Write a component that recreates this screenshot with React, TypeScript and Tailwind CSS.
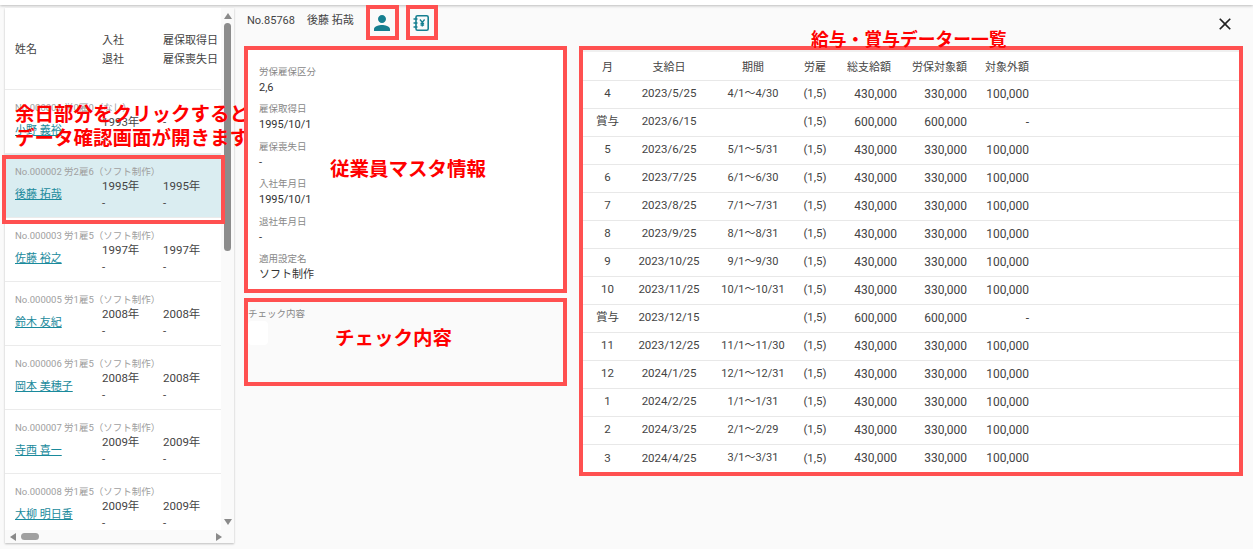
import { MdPerson, MdClose } from 'react-icons/md'

const employees = [
  { no: 'No.000001 労0雇0（なし）', name: '小野 義裕', a: '1993年', b: '-', c: '-' },
  { no: 'No.000002 労2雇6（ソフト制作）', name: '後藤 拓哉', a: '1995年', b: '1995年', c: '-', selected: true },
  { no: 'No.000003 労1雇5（ソフト制作）', name: '佐藤 裕之', a: '1997年', b: '1997年', c: '-' },
  { no: 'No.000005 労1雇5（ソフト制作）', name: '鈴木 友紀', a: '2008年', b: '2008年', c: '-' },
  { no: 'No.000006 労1雇5（ソフト制作）', name: '岡本 美穂子', a: '2008年', b: '2008年', c: '-' },
  { no: 'No.000007 労1雇5（ソフト制作）', name: '寺西 喜一', a: '2009年', b: '2009年', c: '-' },
  { no: 'No.000008 労1雇5（ソフト制作）', name: '大柳 明日香', a: '2009年', b: '2009年', c: '-' },
]

const master = [
  { label: '労保雇保区分', value: '2,6' },
  { label: '雇保取得日', value: '1995/10/1' },
  { label: '雇保喪失日', value: '-' },
  { label: '入社年月日', value: '1995/10/1' },
  { label: '退社年月日', value: '-' },
  { label: '適用設定名', value: 'ソフト制作' },
]

const salary = [
  ['4', '2023/5/25', '4/1～4/30'],
  ['賞与', '2023/6/15', ''],
  ['5', '2023/6/25', '5/1～5/31'],
  ['6', '2023/7/25', '6/1～6/30'],
  ['7', '2023/8/25', '7/1～7/31'],
  ['8', '2023/9/25', '8/1～8/31'],
  ['9', '2023/10/25', '9/1～9/30'],
  ['10', '2023/11/25', '10/1～10/31'],
  ['賞与', '2023/12/15', ''],
  ['11', '2023/12/25', '11/1～11/30'],
  ['12', '2024/1/25', '12/1～12/31'],
  ['1', '2024/2/25', '1/1～1/31'],
  ['2', '2024/3/25', '2/1～2/29'],
  ['3', '2024/4/25', '3/1～3/31'],
]

function BookIcon() {
  return (
    <svg width="16" height="16" viewBox="0 0 16 16" fill="none" stroke="#167f90" className="-ml-[2px]">
      <rect x="3" y="0.8" width="12.2" height="14.4" rx="1.5" strokeWidth="1.6" />
      <path d="M0.5 4h4M0.5 8h4M0.5 12h4" strokeWidth="1.4" />
      <path d="M7 4.5l2.3 3 2.3-3M9.3 7.5v4M7.5 8.4h3.6M7.5 10h3.6" strokeWidth="1.3" />
    </svg>
  )
}

function Arrow({ dir }: { dir: 'up' | 'down' | 'left' | 'right' }) {
  const points = {
    up: '0,6 4,0 8,6',
    down: '0,0 4,6 8,0',
    left: '6,0 0,4 6,8',
    right: '0,0 6,4 0,8',
  }[dir]
  return (
    <svg width="8" height="8" viewBox="0 0 8 8" className="shrink-0">
      <polygon points={points} fill="#8a8a8a" />
    </svg>
  )
}

function EmployeeRow({ item }: { item: (typeof employees)[number] }) {
  return (
    <div className={`relative h-16 shrink-0 border-b border-[#ebebeb] ${item.selected ? 'bg-[#daedf1]' : 'bg-white'}`}>
      <div className="pl-[10px] pt-[11px] text-[9.5px] leading-[14px] text-[#a0a0a0] whitespace-nowrap">{item.no}</div>
      <div className="flex -mt-[1px]">
        <a className="w-[97px] pl-[10px] pt-[8px] text-[11px] leading-[18px] text-[#1a8a9c] underline whitespace-nowrap">{item.name}</a>
        <div className="w-[61px] text-[11.5px] leading-[16px] text-[#444]">
          <div>{item.a}</div>
          <div className="mt-[1px]">{item.c}</div>
        </div>
        <div className="text-[11.5px] leading-[16px] text-[#444]">
          <div>{item.b}</div>
          <div className="mt-[1px]">{item.c}</div>
        </div>
      </div>
    </div>
  )
}

export default function App() {
  return (
    <div className="relative w-[1253px] h-[549px] overflow-hidden bg-[#fafafa] text-[#444] font-['Roboto','Noto_Sans_CJK_JP',sans-serif]">
      <div className="h-[5px] bg-white shadow-[0_1px_3px_rgba(0,0,0,0.25)]" />
      <div className="flex">
        {/* 従業員一覧 */}
        <div className="ml-[5px] mt-[3px] w-[229px] h-[535px] flex flex-col bg-[#fafafa] shadow-[0_1px_2px_rgba(0,0,0,0.25)]">
          <div className="flex flex-1 min-h-0">
            <div className="w-[216px] flex flex-col overflow-hidden">
              <div className="h-[82px] shrink-0 flex bg-white border-b border-[#ebebeb] text-[11px] text-[#444]">
                <div className="w-[97px] pl-[10px] pt-[34px]">姓名</div>
                <div className="w-[61px] pt-[23px] leading-[19px]">
                  <div>入社</div>
                  <div>退社</div>
                </div>
                <div className="pt-[23px] leading-[19px] whitespace-nowrap">
                  <div>雇保取得日</div>
                  <div>雇保喪失日</div>
                </div>
              </div>
              {employees.map(item => <EmployeeRow key={item.no} item={item} />)}
            </div>
            <div className="w-[13px] flex flex-col items-center pt-[5px] pb-[3px]">
              <Arrow dir="up" />
              <div className="w-[7px] h-[228px] mt-[2px] rounded-full bg-[#8c8c8c]" />
              <div className="flex-1" />
              <Arrow dir="down" />
            </div>
          </div>
          <div className="h-[13px] shrink-0 flex items-center pl-[5px] pr-[10px]">
            <Arrow dir="left" />
            <div className="w-[18px] h-[7px] ml-[3px] rounded-full bg-[#a0a0a0]" />
            <div className="flex-1" />
            <Arrow dir="right" />
          </div>
        </div>

        {/* 右側 */}
        <div className="relative z-20 flex-1 ml-[10px]">
          <div className="h-[35px] flex items-center text-[11px] text-[#444]">
            <span className="ml-[3px] w-[60px] -mt-[2px]">No.85768</span>
            <span className="w-[59px] -mt-[2px]">後藤 拓哉</span>
            <div className="w-[33px] h-[35px] flex items-center justify-center border-4 border-[#ff5050]">
              <MdPerson size={24} color="#167f90" className="-ml-[2px]" />
            </div>
            <div className="ml-[7px] w-[32px] h-[35px] flex items-center justify-center border-4 border-[#ff5050]">
              <BookIcon />
            </div>
            <div className="flex-1" />
            <MdClose size={20} color="#222" className="mr-[18px] mt-[3px]" />
          </div>

          <div className="mt-[6px] flex items-start">
            <div className="w-[323px] shrink-0">
              <div className="relative h-[247px] border-4 border-[#ff5050] bg-white pl-[11px] pt-[15px]">
                {master.map(row => (
                  <div key={row.label} className="h-[37.4px]">
                    <div className="text-[9.5px] leading-[14px] text-[#888]">{row.label}</div>
                    <div className="mt-[1px] text-[11px] leading-[16px] text-[#333]">{row.value}</div>
                  </div>
                ))}
                <div className="absolute left-[82px] top-[107px] text-[19.5px] leading-[26px] font-bold text-[#ff0000] whitespace-nowrap">従業員マスタ情報</div>
              </div>
              <div className="relative mt-[5px] h-[88px] border-4 border-[#ff5050] bg-[#fafafa]">
                <div className="pt-[5px] text-[9.5px] leading-[14px] text-[#888]">チェック内容</div>
                <div className="w-[20px] h-[24px] rounded bg-white" />
                <div className="absolute left-[87px] top-[24px] text-[19.5px] leading-[26px] font-bold text-[#ff0000] whitespace-nowrap">チェック内容</div>
              </div>
            </div>

            <div className="relative ml-[12px] w-[664px] h-[430px] border-4 border-[#ff5050] bg-white">
              <div className="absolute left-[228px] top-[-22px] text-[17.8px] leading-[24px] font-bold text-[#ff0000] whitespace-nowrap">給与・賞与データー一覧</div>
              <table className="w-full table-fixed border-collapse text-[11.5px] text-[#444]">
                <colgroup>
                  <col className="w-[49px]" />
                  <col className="w-[74px]" />
                  <col className="w-[94px]" />
                  <col className="w-[30px]" />
                  <col className="w-[67px]" />
                  <col className="w-[70px]" />
                  <col className="w-[62px]" />
                  <col />
                </colgroup>
                <thead>
                  <tr className="h-[29px] border-t-2 border-b border-t-[#f0f0f0] border-b-[#e8e8e8] text-[11px]">
                    <th className="font-normal text-center pt-[4px]">月</th>
                    <th className="font-normal text-center pt-[4px]">支給日</th>
                    <th className="font-normal text-center pt-[4px]">期間</th>
                    <th className="font-normal text-center pt-[4px]">労雇</th>
                    <th className="font-normal text-right pr-[6px] pt-[4px]">総支給額</th>
                    <th className="font-normal text-right pt-[4px]">労保対象額</th>
                    <th className="font-normal text-right pt-[4px]">対象外額</th>
                    <th />
                  </tr>
                </thead>
                <tbody>
                  {salary.map(([month, date, period], i) => {
                    const bonus = month === '賞与'
                    return (
                      <tr key={i} className="h-[28px] border-b border-[#e8e8e8] last:border-b-0">
                        <td className="text-center">{month}</td>
                        <td className="text-center">{date}</td>
                        <td className="text-center text-[11px]">{period}</td>
                        <td className="text-center">(1,5)</td>
                        <td className="text-right text-[12px]">{bonus ? '600,000' : '430,000'}</td>
                        <td className="text-right text-[12px]">{bonus ? '600,000' : '330,000'}</td>
                        <td className="text-right text-[12px]">{bonus ? '-' : '100,000'}</td>
                        <td />
                      </tr>
                    )
                  })}
                </tbody>
              </table>
            </div>
          </div>
        </div>
      </div>

      {/* 注釈 */}
      <div className="absolute z-10 left-[15px] top-[103px] text-[19.5px] leading-[24px] font-bold text-[#ff0000] whitespace-nowrap">
        <div>余日部分をクリックすると</div>
        <div>データ確認画面が開きます</div>
      </div>
      <div className="absolute z-10 left-[2px] top-[155px] w-[223px] h-[69px] border-4 border-[#ff5050]" />
    </div>
  )
}
